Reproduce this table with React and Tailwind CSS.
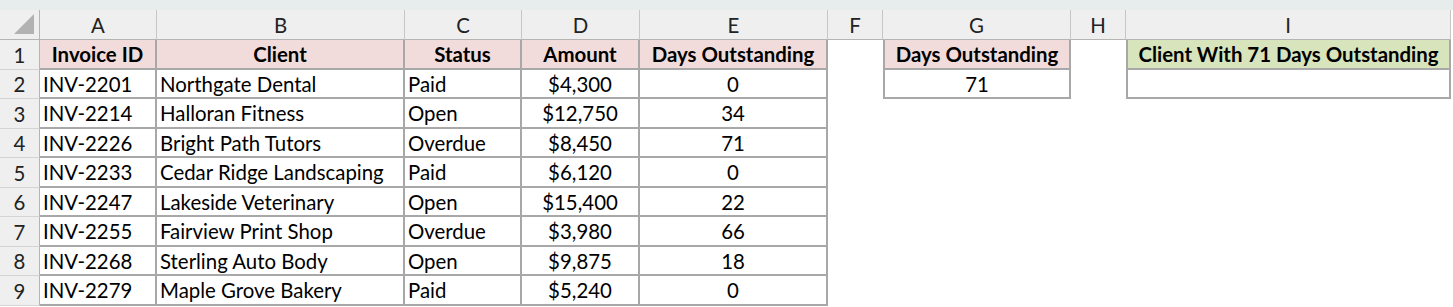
import React from 'react'

const cols = ['A', 'B', 'C', 'D', 'E', 'F', 'G', 'H', 'I']
const rowHeights = ['h-[30px]', 'h-[29px]', 'h-[30px]', 'h-[29px]', 'h-[30px]', 'h-[29px]', 'h-[30px]', 'h-[29px]', 'h-[30px]']

const invoices = [
	['INV-2201', 'Northgate Dental', 'Paid', '$4,300', '0'],
	['INV-2214', 'Halloran Fitness', 'Open', '$12,750', '34'],
	['INV-2226', 'Bright Path Tutors', 'Overdue', '$8,450', '71'],
	['INV-2233', 'Cedar Ridge Landscaping', 'Paid', '$6,120', '0'],
	['INV-2247', 'Lakeside Veterinary', 'Open', '$15,400', '22'],
	['INV-2255', 'Fairview Print Shop', 'Overdue', '$3,980', '66'],
	['INV-2268', 'Sterling Auto Body', 'Open', '$9,875', '18'],
	['INV-2279', 'Maple Grove Bakery', 'Paid', '$5,240', '0'],
]

function Cell({ children, className = '' }) {
	return <div className={`flex items-center pt-px overflow-hidden whitespace-nowrap ${className}`}>{children}</div>
}

const line = 'border-[#a8a8a8]'

export default function App() {
	const rows = [
		['Invoice ID', 'Client', 'Status', 'Amount', 'Days Outstanding'],
		...invoices,
	]

	return (
		<div className="w-[1453px] h-[307px] bg-white overflow-hidden text-[20.4px] text-black" style={{ fontFamily: 'Lato, "Open Sans", sans-serif' }}>
			<div className="h-[10px] bg-[#e7eded]" />
			<div className="grid grid-cols-[40px_117px_248px_117px_118px_188px_55px_188px_55px_325px]">
				{/* column headers */}
				<div className="h-[30px] bg-[#efefef] border-r border-b border-[#b4b4b4] relative">
					<svg className="absolute right-[5px] bottom-[5px]" width="20" height="20" viewBox="0 0 20 20">
						<polygon points="20,0 20,20 0,20" fill="#b2b2b2" />
					</svg>
				</div>
				{cols.map(c => (
					<Cell key={c} className="h-[30px] justify-center bg-[#efefef] border-r border-b border-[#c6c6c6] border-b-[#b4b4b4] text-[#222]">{c}</Cell>
				))}

				{rows.map((r, i) => {
					const h = rowHeights[i]
					const head = i === 0
					const bg = head ? 'bg-[#f2dcdb] font-bold' : ''
					return (
						<React.Fragment key={i}>
							<Cell className={`${h} justify-center bg-[#efefef] border-r border-b border-[#b4b4b4] border-b-[#d4d4d4] text-[#222]`}>{i + 1}</Cell>
							<Cell className={`${h} ${bg} ${head ? 'justify-center' : 'pl-[3px]'} border-r-2 border-b-2 ${line}`}>{r[0]}</Cell>
							<Cell className={`${h} ${bg} ${head ? 'justify-center' : 'pl-[3px]'} border-r-2 border-b-2 ${line}`}>{r[1]}</Cell>
							<Cell className={`${h} ${bg} ${head ? 'justify-center' : 'pl-[3px]'} border-r-2 border-b-2 ${line}`}>{r[2]}</Cell>
							<Cell className={`${h} ${bg} justify-center border-r-2 border-b-2 ${line}`}>{r[3]}</Cell>
							<Cell className={`${h} ${bg} justify-center border-r-2 border-b-2 ${line}`}>{r[4]}</Cell>
							<div className={h} />
							{i === 0 && <Cell className={`${h} justify-center bg-[#f2dcdb] font-bold border-l-2 border-r-2 border-b-2 ${line}`}>Days Outstanding</Cell>}
							{i === 1 && <Cell className={`${h} justify-center border-l-2 border-r-2 border-b-2 ${line}`}>71</Cell>}
							{i > 1 && <div className={h} />}
							<div className={h} />
							{i === 0 && <Cell className={`${h} justify-center bg-[#d8e4bc] font-bold border-l-2 border-r-2 border-b-2 ${line}`}>Client With 71 Days Outstanding</Cell>}
							{i === 1 && <Cell className={`${h} border-l-2 border-r-2 border-b-2 ${line}`} />}
							{i > 1 && <div className={h} />}
						</React.Fragment>
					)
				})}
			</div>
		</div>
	)
}
